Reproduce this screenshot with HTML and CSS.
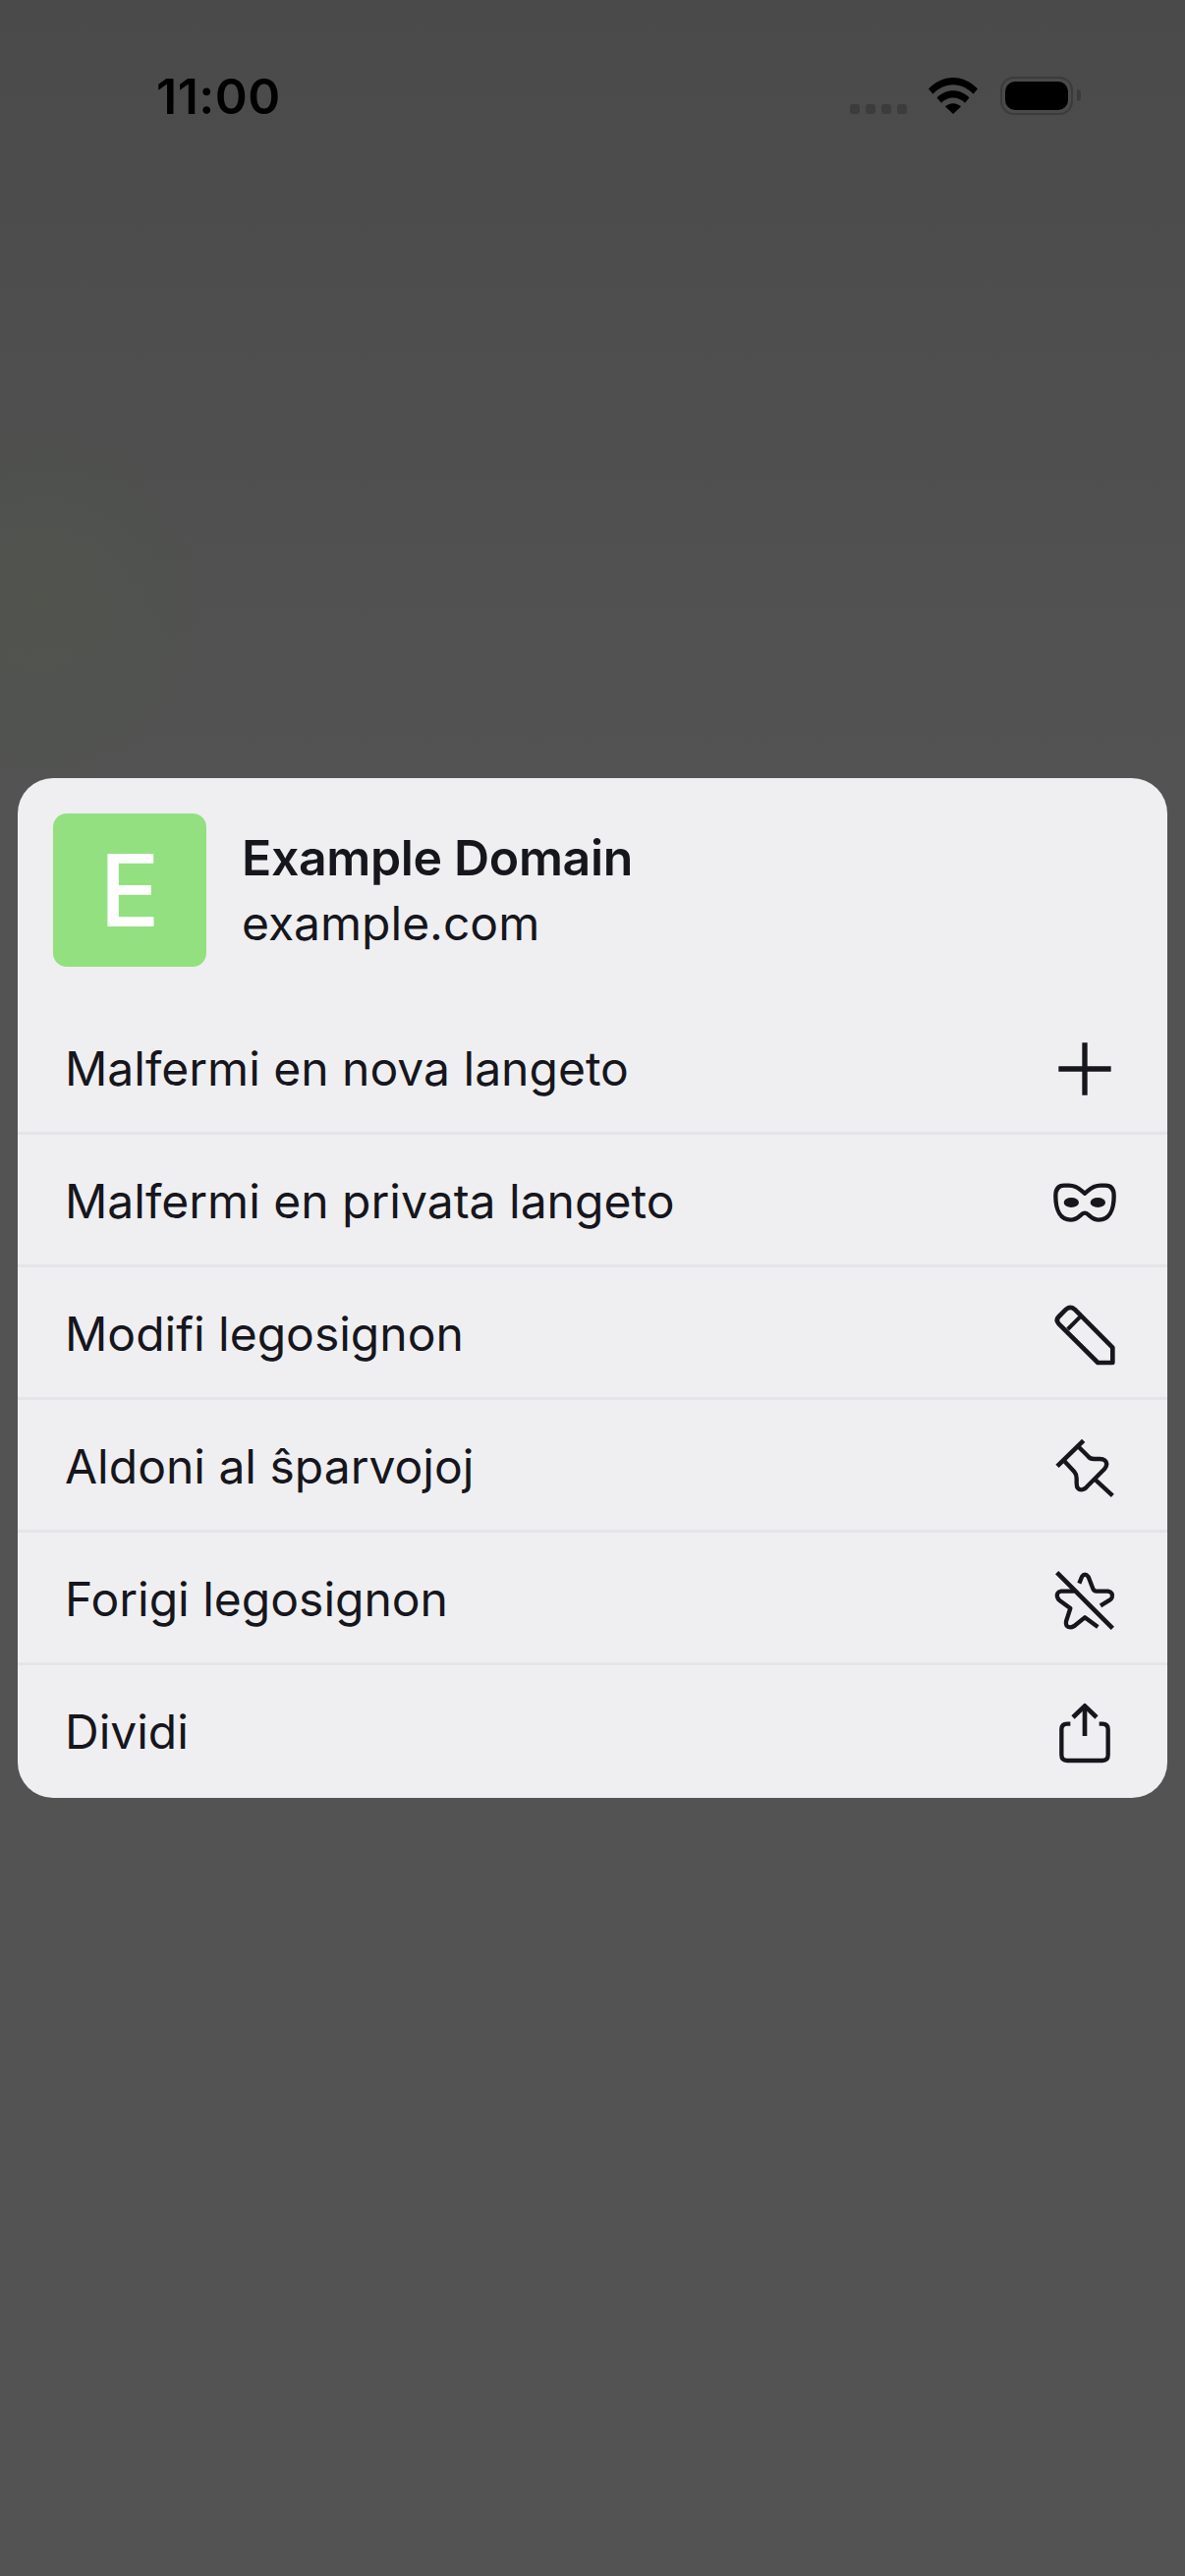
FILE: index.html
```html
<!DOCTYPE html>
<html lang="eo">
<head>
<meta charset="utf-8">
<title>Example Domain</title>
<link rel="stylesheet" href="styles.css">
</head>
<body>
<div class="screen">
  <header class="status">
    <span class="clock">11:00</span>
    <div class="status-icons">
      <div class="signal"><i></i><i></i><i></i><i></i></div>
      <svg class="wifi" width="50" height="37" viewBox="0 0 50 37">
        <path d="M0 11.5C6.5 4.5 15.500 0 25 0s18.500 4.500 25 11.500l-4.500 5.200C40 11 33 7.300 25 7.300S10 11 4.500 16.700Z"/>
        <path d="M8.500 20.500C12.800 16 18.700 13.300 25 13.300s12.200 2.700 16.500 7.200L37 25.700c-3-3.200-7.300-5.200-12-5.200s-9 2-12 5.200Z"/>
        <path d="M17 29.500c2-2 4.900-3.300 8-3.300s6 1.300 8 3.300L25 37Z"/>
      </svg>
      <div class="battery"><div class="battery-fill"></div></div>
      <div class="battery-cap"></div>
    </div>
  </header>

  <section class="sheet">
    <div class="head">
      <div class="favicon">E</div>
      <div class="head-text">
        <div class="title">Example Domain</div>
        <div class="domain">example.com</div>
      </div>
    </div>
    <ul class="menu">
      <li class="row">
        <span class="label">Malfermi en nova langeto</span>
        <svg class="icon" viewBox="102 26 240 240"><path d="M222 63V223M142 143H302" stroke-width="16"/></svg>
      </li>
      <li class="row">
        <span class="label">Malfermi en privata langeto</span>
        <svg class="icon" viewBox="102 430 240 240">
          <path d="M222 522C235 512 245 498 270 498H285C304 498 311 510 311 530C311 575 295 603 265 603C240 603 235 582 222 582C209 582 204 603 179 603C149 603 133 575 133 530C133 510 140 498 159 498H174C199 498 209 512 222 522Z" stroke-width="13"/>
          <ellipse class="solid" cx="181" cy="550" rx="23" ry="15"/>
          <ellipse class="solid" cx="262" cy="550" rx="23" ry="15"/>
        </svg>
      </li>
      <li class="row">
        <span class="label">Modifi legosignon</span>
        <svg class="icon" viewBox="102 54 240 240">
          <path d="M165 95Q178 84 191 95L307 212V258H262L143 140Q132 128 143 117Z" stroke-width="14"/>
          <path d="M170 156L207 119" stroke-width="12"/>
        </svg>
      </li>
      <li class="row">
        <span class="label">Aldoni al ŝparvojoj</span>
        <svg class="icon" viewBox="102 458 240 240">
          <path d="M138 573L218 495" stroke-width="14"/>
          <path d="M160 558L190 590Q197 598 197 610V625Q197 645 212 645Q222 645 232 632L282 582Q295 565 283 555Q278 551 268 551H250Q238 551 232 543L204 515" stroke-width="13"/>
          <path d="M255 615L307 663" stroke-width="13"/>
        </svg>
      </li>
      <li class="row">
        <span class="label">Forigi legosignon</span>
        <svg class="icon" viewBox="102 84 240 240">
          <path d="M137 119L307 289" stroke-width="14"/>
          <path d="M205 152L213 132Q222 118 233 132L247 168Q250 176 258 176H293Q310 180 305 195Q303 200 298 203L270 220" stroke-width="13"/>
          <path d="M190 176H150Q135 178 138 193Q140 200 146 205L178 228L165 268Q162 285 178 286Q183 286 190 282L222 256L262 285" stroke-width="13"/>
        </svg>
      </li>
      <li class="row">
        <span class="label">Dividi</span>
        <svg class="icon" viewBox="102 488 240 240">
          <path d="M222 617V526" stroke-width="14"/>
          <path d="M186 560L222 525L258 560" stroke-width="14"/>
          <path d="M178 580H168Q151 580 151 597V675Q151 692 168 692H276Q293 692 293 675V597Q293 580 276 580H266" stroke-width="13"/>
        </svg>
      </li>
    </ul>
  </section>
</div>
</body>
</html>
```
FILE: styles.css
```css
* { box-sizing: border-box; }
html, body { margin: 0; padding: 0; }
body { width: 1206px; height: 2622px; overflow: hidden; font-family: Inter, "Noto Sans", sans-serif; }

.screen {
  width: 1206px;
  height: 2622px;
  padding: 0 18px;
  background:
    radial-gradient(ellipse 170px 190px at 40px 610px, rgba(80, 92, 70, 0.28), rgba(80, 92, 70, 0) 100%),
    linear-gradient(180deg, #4a4a4a 0, #525352 780px, #535353 100%);
}

.status {
  height: 792px;
  display: flex;
  justify-content: space-between;
  align-items: flex-start;
  padding: 68px 0 0 141px;
}
.clock {
  font-size: 50px;
  font-weight: 600;
  line-height: 60px;
  letter-spacing: 0.5px;
  color: #000;
}
.status-icons {
  display: flex;
  align-items: flex-end;
  margin-top: 10px;
  margin-right: 88px;
  height: 39px;
}
.signal { display: flex; gap: 6px; margin-right: 22px; margin-bottom: 1px; }
.signal i { display: block; width: 10px; height: 10px; border-radius: 3px; background: #3c3c3c; }
.wifi { fill: #000; margin-right: 23px; margin-bottom: 1px; }
.battery {
  width: 74px;
  height: 39px;
  padding: 3px;
  border: 2px solid #3b3b3b;
  border-radius: 14px;
  background: #4a4a4a;
}
.battery-fill { width: 100%; height: 100%; border-radius: 10px; background: #000; }
.battery-cap {
  width: 4px;
  height: 12px;
  margin: 0 0 14px 4px;
  border-radius: 0 6px 6px 0;
  background: #3b3b3b;
}

.sheet {
  height: 1038px;
  border-radius: 36px;
  background: #efeff1;
  color: #16161d;
}
.head {
  display: flex;
  align-items: center;
  gap: 36px;
  height: 225px;
  padding: 36px 36px 33px;
}
.favicon {
  width: 156px;
  height: 156px;
  flex: none;
  display: flex;
  align-items: center;
  justify-content: center;
  border-radius: 14px;
  background: #92e080;
  color: #fff;
  font-size: 102px;
  font-weight: 500;
}
.head-text { padding-top: 1px; }
.title { font-size: 50px; font-weight: 600; line-height: 67px; letter-spacing: -0.35px; }
.domain { font-size: 48px; font-weight: 400; line-height: 67px; margin-top: -1px; }

.menu { list-style: none; margin: 0; padding: 0; }
.row {
  display: flex;
  align-items: center;
  justify-content: space-between;
  height: 135px;
  padding: 5px 44px 0 48px;
  border-top: 3px solid #e5e5e9;
}
.row:first-child { border-top-color: transparent; }
.label { font-size: 48px; font-weight: 400; margin-bottom: 3px; }
.icon {
  width: 80px;
  height: 80px;
  flex: none;
  fill: none;
  stroke: #16161d;
  stroke-linejoin: round;
}
.icon .solid { fill: #16161d; stroke: none; }
```
